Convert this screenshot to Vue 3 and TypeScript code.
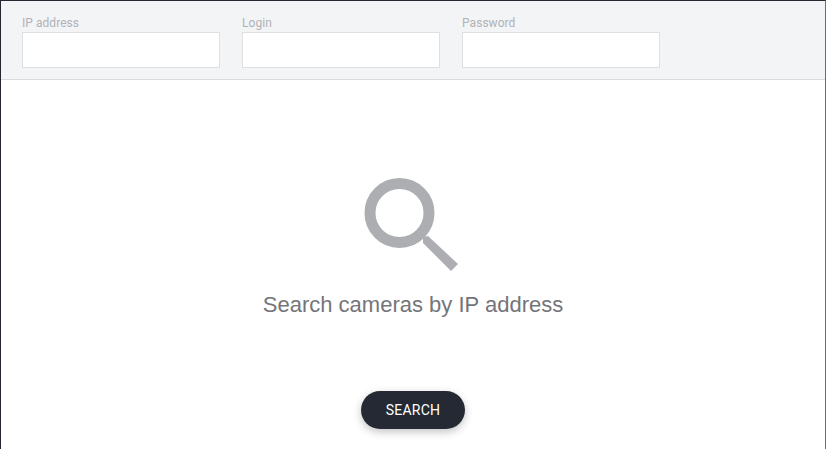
<script setup lang="ts">
const fields: string[] = ['IP address', 'Login', 'Password']
</script>

<template>
  <div class="window">
    <header class="bar">
      <label v-for="f in fields" :key="f" class="field">
        <span class="label">{{ f }}</span>
        <input class="input" type="text" />
      </label>
    </header>
    <main class="body">
      <svg class="icon" width="100" height="96" viewBox="0 0 100 96" aria-hidden="true">
        <circle cx="36.5" cy="36" r="29.5" fill="none" stroke="#adaeb1" stroke-width="11" />
        <path d="M60 60 L65 59 L95 87 L88 94 L60 66 Z" fill="#adaeb1" />
      </svg>
      <p class="message">Search cameras by IP address</p>
      <button class="search" type="button">SEARCH</button>
    </main>
  </div>
</template>

<style>
html, body { margin: 0; background: #fff; }
</style>

<style scoped>
.window {
  box-sizing: border-box;
  width: 826px;
  height: 449px;
  border: 1px solid #23272f;
  border-bottom: 0;
  border-right-color: #6b6d72;
  display: flex;
  flex-direction: column;
  font-family: Roboto, "Liberation Sans", sans-serif;
  overflow: hidden;
}
.bar {
  box-sizing: border-box;
  height: 79px;
  flex: none;
  display: flex;
  gap: 22px;
  padding: 14px 21px 0;
  background: #f3f4f6;
  border-bottom: 1px solid #d9dadc;
}
.field { display: flex; flex-direction: column; width: 198px; }
.label {
  font-size: 12px;
  line-height: 17px;
  letter-spacing: 0.05px;
  color: #b0b2b6;
}
.input {
  box-sizing: border-box;
  width: 198px;
  height: 36px;
  margin: 0;
  padding: 0 8px;
  background: #fff;
  border: 1px solid #dedfe0;
  border-radius: 0;
  outline: none;
}
.body {
  flex: 1;
  display: flex;
  flex-direction: column;
  align-items: center;
  padding-top: 97px;
}
.icon { display: block; }
.message {
  margin: 17px 0 0;
  font-family: "Liberation Sans", Arial, sans-serif;
  font-size: 22px;
  line-height: 30px;
  color: #747579;
}
.search {
  margin-top: 71px;
  width: 104px;
  height: 38px;
  padding: 0;
  border: 0;
  border-radius: 19px;
  background: #242933;
  color: #fff;
  font-family: inherit;
  font-size: 14px;
  letter-spacing: 0.2px;
  box-shadow: 0 3px 8px rgba(0, 0, 0, 0.24);
}
</style>
